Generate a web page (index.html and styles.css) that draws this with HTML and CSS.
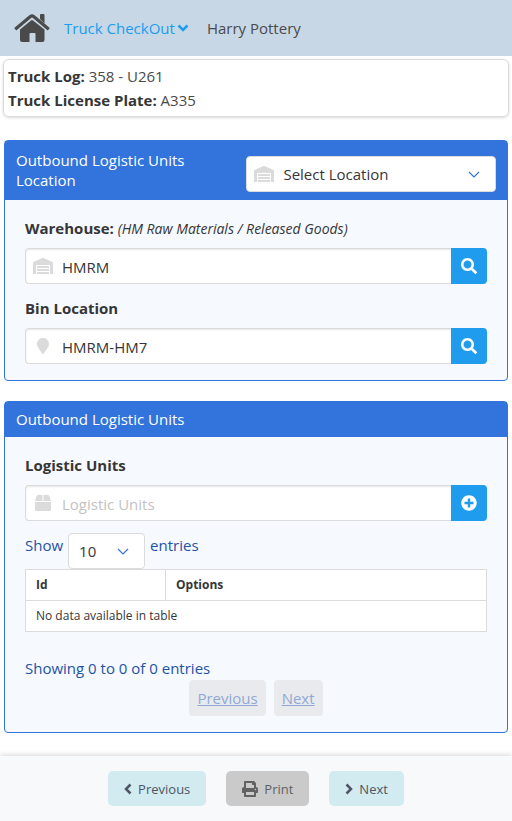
FILE: index.html
```html
<!DOCTYPE html>
<html lang="en">
<head>
<meta charset="utf-8">
<meta name="viewport" content="width=device-width, initial-scale=1">
<title>Truck CheckOut</title>
<link rel="stylesheet" href="styles.css">
</head>
<body>
<svg class="sprite" aria-hidden="true">
  <symbol id="warehouse" viewBox="0 0 640 512"><path d="M504 352H136.400c-4.400 0-8 3.600-8 8l-.1 48c0 4.400 3.600 8 8 8H504c4.400 0 8-3.600 8-8v-48c0-4.400-3.600-8-8-8zm0 96H136.100c-4.400 0-8 3.600-8 8l-.1 48c0 4.400 3.600 8 8 8h368c4.400 0 8-3.600 8-8v-48c0-4.400-3.600-8-8-8zm0-192H136.600c-4.400 0-8 3.600-8 8l-.1 48c0 4.400 3.600 8 8 8H504c4.400 0 8-3.600 8-8v-48c0-4.400-3.600-8-8-8zm106.500-139L338.400 3.700a48.150 48.150 0 0 0-36.900 0L29.500 117C11.700 124.500 0 141.900 0 161.300V504c0 4.400 3.600 8 8 8h80c4.400 0 8-3.600 8-8V256c0-17.600 14.600-32 32.600-32h382.800c18 0 32.600 14.400 32.600 32v248c0 4.400 3.600 8 8 8h80c4.400 0 8-3.600 8-8V161.300c0-19.400-11.700-36.800-29.500-44.300z"/></symbol>
  <symbol id="search" viewBox="0 0 512 512"><path d="M505 442.700L405.300 343c-4.500-4.500-10.600-7-17-7H372c27.600-35.300 44-79.700 44-128C416 93.100 322.900 0 208 0S0 93.100 0 208s93.100 208 208 208c48.300 0 92.700-16.400 128-44v16.300c0 6.400 2.500 12.500 7 17l99.700 99.700c9.400 9.400 24.600 9.400 33.900 0l28.300-28.300c9.400-9.400 9.400-24.600.1-34zM208 336c-70.700 0-128-57.200-128-128 0-70.700 57.200-128 128-128 70.700 0 128 57.200 128 128 0 70.700-57.200 128-128 128z"/></symbol>
  <symbol id="plus" viewBox="0 0 512 512"><path d="M256 8C119 8 8 119 8 256s111 248 248 248 248-111 248-248S393 8 256 8zm144 276c0 6.600-5.400 12-12 12h-92v92c0 6.600-5.400 12-12 12h-56c-6.600 0-12-5.400-12-12v-92h-92c-6.600 0-12-5.400-12-12v-56c0-6.600 5.400-12 12-12h92v-92c0-6.600 5.400-12 12-12h56c6.600 0 12 5.400 12 12v92h92c6.600 0 12 5.400 12 12v56z"/></symbol>
  <symbol id="arrow" viewBox="0 0 12 8"><path d="M1 1l5 5 5-5" fill="none" stroke="currentColor" stroke-width="1.2"/></symbol>
</svg>

<nav class="navbar">
  <a class="home" href="#" aria-label="Home">
    <svg viewBox="0 0 36 28" width="36" height="28"><path d="M26 5V1q0-1 1-1h2.500q1 0 1 1v8.500z"/><path d="M1.200 15.200L16.400 2.600q1.600-1.300 3.200 0L34.800 15.200" fill="none" stroke="currentColor" stroke-width="3.200"/><path d="M6 15.500L17 6.500q1-.8 2 0l11.500 9V26q0 2-2 2h-7v-8q0-1-1-1h-4q-1 0-1 1v8H8q-2 0-2-2z"/></svg>
  </a>
  <a class="nav-menu" href="#">Truck CheckOut<svg viewBox="0 0 12 8" width="12" height="8"><path d="M1.500 1.500L6 6l4.500-4.500" fill="none" stroke="currentColor" stroke-width="2.500"/></svg></a>
  <a class="nav-user" href="#">Harry Pottery</a>
</nav>

<main>
  <section class="summary">
    <p><strong>Truck Log:</strong> 358 - U261</p>
    <p><strong>Truck License Plate:</strong> A335</p>
  </section>

  <section class="panel">
    <header class="panel-head">
      <h2>Outbound Logistic Units Location</h2>
      <div class="select location">
        <svg class="lead" width="20" height="16"><use href="#warehouse"/></svg>
        <select aria-label="Select Location"><option>Select Location</option></select>
        <svg class="arrow" width="12" height="8"><use href="#arrow"/></svg>
      </div>
    </header>
    <div class="panel-body">
      <div class="field">
        <label for="warehouse-input">Warehouse: <em>(HM Raw Materials / Released Goods)</em></label>
        <div class="addons">
          <svg class="lead" width="20" height="16"><use href="#warehouse"/></svg>
          <input id="warehouse-input" type="text" value="HMRM">
          <button type="button" aria-label="Search warehouse"><svg width="16" height="16"><use href="#search"/></svg></button>
        </div>
      </div>
      <div class="field">
        <label for="bin-input">Bin Location</label>
        <div class="addons">
          <svg class="lead" viewBox="0 0 384 512" width="20" height="16"><path d="M172.268 501.670C26.970 291.031 0 269.413 0 192 0 85.961 85.961 0 192 0s192 85.961 192 192c0 77.413-26.970 99.031-172.268 309.670-9.535 13.774-29.930 13.773-39.464 0z"/></svg>
          <input id="bin-input" type="text" value="HMRM-HM7">
          <button type="button" aria-label="Search bin"><svg width="16" height="16"><use href="#search"/></svg></button>
        </div>
      </div>
    </div>
  </section>

  <section class="panel">
    <header class="panel-head">
      <h2>Outbound Logistic Units</h2>
    </header>
    <div class="panel-body">
      <div class="field">
        <label for="units-input">Logistic Units</label>
        <div class="addons">
          <svg class="lead" viewBox="0 0 512 512" width="20" height="16"><path d="M509.500 184.600L458.900 32.800C452.400 13.200 434.100 0 413.400 0H272v192h238.700c-.4-2.500-.4-5-1.200-7.400zM240 0H98.600c-20.700 0-39 13.200-45.500 32.800L2.500 184.600c-.8 2.400-.8 4.900-1.200 7.400H240V0zM0 224v240c0 26.500 21.500 48 48 48h416c26.500 0 48-21.500 48-48V224H0z"/></svg>
          <input id="units-input" type="text" placeholder="Logistic Units">
          <button type="button" aria-label="Add logistic unit"><svg width="16" height="16"><use href="#plus"/></svg></button>
        </div>
      </div>
      <div class="length">
        <label for="length-select">Show</label>
        <div class="select">
          <select id="length-select"><option>10</option></select>
          <svg class="arrow" width="12" height="8"><use href="#arrow"/></svg>
        </div>
        <span>entries</span>
      </div>
      <table>
        <thead><tr><th class="col-id">Id</th><th>Options</th></tr></thead>
        <tbody><tr><td colspan="2">No data available in table</td></tr></tbody>
      </table>
      <p class="info">Showing 0 to 0 of 0 entries</p>
      <div class="pages">
        <a href="#" aria-disabled="true">Previous</a>
        <a href="#" aria-disabled="true">Next</a>
      </div>
    </div>
  </section>
</main>

<footer class="actions">
  <button type="button"><svg viewBox="0 0 8 12" width="8" height="12"><path d="M6.500 1.500L2 6l4.500 4.500" fill="none" stroke="currentColor" stroke-width="2.500"/></svg>Previous</button>
  <button type="button" class="print"><svg viewBox="0 0 512 512" width="16" height="16"><path d="M448 192V77.250c0-8.490-3.370-16.620-9.370-22.630L393.370 9.370c-6-6-14.140-9.370-22.630-9.370H96C78.330 0 64 14.330 64 32v160c-35.350 0-64 28.650-64 64v112c0 8.840 7.160 16 16 16h48v96c0 17.670 14.330 32 32 32h320c17.670 0 32-14.330 32-32v-96h48c8.840 0 16-7.160 16-16V256c0-35.350-28.650-64-64-64zm-64 256H128v-96h256v96zm0-224H128V64h192v48c0 8.840 7.160 16 16 16h48v96zm48 72c-13.250 0-24-10.750-24-24 0-13.260 10.750-24 24-24s24 10.740 24 24c0 13.250-10.750 24-24 24z"/></svg>Print</button>
  <button type="button"><svg viewBox="0 0 8 12" width="8" height="12"><path d="M1.500 1.500L6 6l-4.500 4.500" fill="none" stroke="currentColor" stroke-width="2.500"/></svg>Next</button>
</footer>
</body>
</html>
```
FILE: styles.css
```css
* {
  box-sizing: border-box;
}

body {
  margin: 0;
  min-height: 100vh;
  display: flex;
  flex-direction: column;
  background: #fff;
  color: #4a4a4a;
  font: 15px/24px "Open Sans", "Noto Sans", sans-serif;
}

h2,
p {
  margin: 0;
  font-size: 15px;
  font-weight: 400;
}

svg {
  fill: currentColor;
  flex: none;
}

.sprite {
  display: none;
}

input,
select,
button {
  font: inherit;
  color: #363636;
  margin: 0;
}

a {
  color: inherit;
  text-decoration: none;
}

.navbar {
  display: flex;
  align-items: center;
  height: 56px;
  padding: 0 14px;
  background: #c8d7e6;
}

.home {
  display: flex;
  margin-right: 14px;
}

.nav-menu {
  display: flex;
  align-items: center;
  gap: 2px;
  margin-right: 18px;
  color: #209cee;
}

.summary {
  margin: 3px 3px 23px;
  padding: 4px;
  border: 1px solid #dbdbdb;
  border-radius: 6px;
  box-shadow: 0 1px 3px rgba(10, 10, 10, 0.15);
}

strong {
  color: #363636;
}

.panel {
  margin: 0 4px 20px;
  border: 1px solid #3273dc;
  border-radius: 4px;
  background: #f6f9fe;
}

.panel-head {
  display: flex;
  align-items: center;
  justify-content: space-between;
  gap: 16px;
  padding: 7px 11px 8px;
  background: #3273dc;
  color: #fff;
}

.panel-head h2 {
  line-height: 20px;
}

.panel-body {
  padding: 16px 20px;
}

.field {
  margin-bottom: 12px;
}

.panel:first-of-type .field:last-child,
.field:last-child {
  margin-bottom: 0;
}

.field label {
  display: block;
  margin-bottom: 8px;
  color: #363636;
  font-weight: 700;
}

.field em {
  font-size: 14px;
  font-weight: 400;
  line-height: 16px;
}

.addons,
.select {
  position: relative;
  display: flex;
}

.lead {
  position: absolute;
  top: 10px;
  left: 8px;
  color: #dbdbdb;
}

.addons input {
  flex: 1;
  min-width: 0;
  height: 36px;
  padding: 2px 12px 0 36px;
  border: 1px solid #dbdbdb;
  border-right: 0;
  border-radius: 4px 0 0 4px;
  background: #fff;
  box-shadow: inset 0 1px 2px rgba(10, 10, 10, 0.1);
}

.addons input::placeholder {
  color: #c3c3c3;
}

.addons button {
  display: flex;
  align-items: center;
  justify-content: center;
  width: 36px;
  height: 36px;
  padding: 0;
  border: 0;
  border-radius: 0 4px 4px 0;
  background: #209cee;
  color: #fff;
}

.select select {
  width: 77px;
  height: 36px;
  padding: 0 32px 0 10px;
  border: 1px solid #dbdbdb;
  border-radius: 4px;
  background: #fff;
  appearance: none;
}

.arrow {
  position: absolute;
  top: 15px;
  right: 16px;
  color: #3273dc;
  pointer-events: none;
}

.location {
  flex: 0 0 52%;
  margin-top: 8px;
}

.select.location select {
  width: 100%;
  padding-left: 36px;
}

.length {
  display: flex;
  gap: 5px;
  color: #2353a5;
}

table {
  width: 100%;
  border-collapse: collapse;
  background: #fff;
  color: #363636;
  font-size: 12px;
  line-height: 18px;
}

th,
td {
  padding: 6px 10px;
  border: 1px solid #dbdbdb;
  text-align: left;
}

.col-id {
  width: 140px;
}

.info {
  margin-top: 24px;
  color: #2353a5;
}

.pages {
  display: flex;
  justify-content: center;
  gap: 8px;
}

.pages a {
  height: 36px;
  padding: 6px 8px;
  border-radius: 4px;
  background: #e8eaee;
  color: #92a8d2;
  text-decoration: underline;
}

.actions {
  display: flex;
  justify-content: center;
  gap: 20px;
  margin-top: auto;
  padding: 15px 16px;
  background: #f8f9fb;
  box-shadow: 0 -2px 4px rgba(10, 10, 10, 0.12);
}

.actions button {
  display: flex;
  align-items: center;
  gap: 6px;
  height: 35px;
  padding: 0 16px;
  border: 0;
  border-radius: 5px;
  background: #d1ebf0;
  color: #4f5564;
  font-size: 13px;
}

.actions .print {
  background: #cacaca;
  color: #626262;
}
```
